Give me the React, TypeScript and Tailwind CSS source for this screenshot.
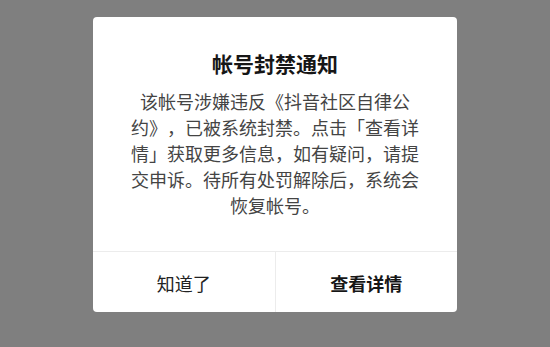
export default function App() {
  return (
    <div
      className="w-[550px] h-[347px] bg-[#7f7f7f] flex justify-center pt-[17px] [text-spacing-trim:space-all]"
      style={{ fontFamily: '"Noto Sans CJK SC", "Noto Sans", sans-serif' }}
    >
      <div className="w-[364px] h-[295px] bg-white rounded-[4px] flex flex-col overflow-hidden">
        {/* Content */}
        <div className="flex-1 flex flex-col items-center pt-[32px] px-[30px]">
          <h1 className="text-[21px] leading-[28px] font-bold text-[#161616]">帐号封禁通知</h1>
          <p className="mt-[11px] w-[296px] text-center text-[18px] leading-[26px] text-[#444]">
            该帐号涉嫌违反《抖音社区自律公约》，已被系统封禁。点击「查看详情」获取更多信息，如有疑问，请提交申诉。待所有处罚解除后，系统会恢复帐号。
          </p>
        </div>

        {/* Buttons */}
        <div className="h-[61px] border-t border-[#ececec] flex">
          <button className="flex-1 flex items-center justify-center pt-[3px] text-[18px] text-[#222]">
            知道了
          </button>
          <div className="w-px bg-[#ececec]" />
          <button className="flex-1 flex items-center justify-center pt-[3px] text-[18px] font-bold text-[#161616]">
            查看详情
          </button>
        </div>
      </div>
    </div>
  );
}
